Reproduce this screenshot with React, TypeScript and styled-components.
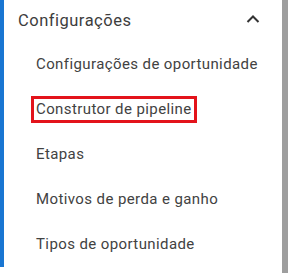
import React from "react";
import styled, { createGlobalStyle } from "styled-components";

const GlobalStyle = createGlobalStyle`
  html, body {
    margin: 0;
    padding: 0;
    background: #ffffff;
  }
  body {
    font-family: Roboto, "Liberation Sans", Arial, sans-serif;
  }
`;

const Page = styled.div`
  width: 288px;
  height: 273px;
  display: flex;
  background: #ffffff;
  overflow: hidden;
`;

const Nav = styled.nav`
  flex: 1;
  display: flex;
  flex-direction: column;
  align-self: flex-start;
  border-left: 4px solid #1976d2;
`;

const GroupHeader = styled.div`
  height: 40px;
  display: flex;
  align-items: center;
  justify-content: space-between;
  padding: 0 22px 0 14px;
  font-size: 16.5px;
  letter-spacing: 0.5px;
  color: #3d3d3d;
`;

const Chevron = styled.svg`
  width: 14px;
  height: 14px;
  margin-top: -2px;
  color: #333333;
`;

const List = styled.ul`
  list-style: none;
  margin: 0;
  padding: 2px 0 0 0;
`;

const Item = styled.li`
  height: 45px;
  display: flex;
  align-items: center;
  padding-left: 32px;
  font-size: 15px;
  letter-spacing: 0.4px;
  color: #424242;
`;

type LabelProps = {
  $highlighted?: boolean;
};

const Label = styled.span<LabelProps>`
  line-height: 17px;
  ${(props) =>
    props.$highlighted
      ? `
    border: 3px solid #e3131b;
    padding: 2px 2px 2px 2px;
    margin-left: -5px;
    margin-top: -1px;
  `
      : ""}
`;

const Scrollbar = styled.div`
  width: 6px;
  height: 100%;
  background: #9e9e9e;
`;

const items = [
  "Configurações de oportunidade",
  "Construtor de pipeline",
  "Etapas",
  "Motivos de perda e ganho",
  "Tipos de oportunidade",
];

const App = () => {
  return (
    <>
      <GlobalStyle />
      <Page>
        <Nav>
          <GroupHeader>
            <span>Configurações</span>
            <Chevron viewBox="0 0 14 14" fill="none">
              <path
                d="M1.5 10L7 4.5l5.5 5.5"
                stroke="currentColor"
                strokeWidth="2"
              />
            </Chevron>
          </GroupHeader>
          <List>
            {items.map((label, index) => (
              <Item key={label}>
                <Label $highlighted={index === 1}>{label}</Label>
              </Item>
            ))}
          </List>
        </Nav>
        <Scrollbar />
      </Page>
    </>
  );
};

export default App;
